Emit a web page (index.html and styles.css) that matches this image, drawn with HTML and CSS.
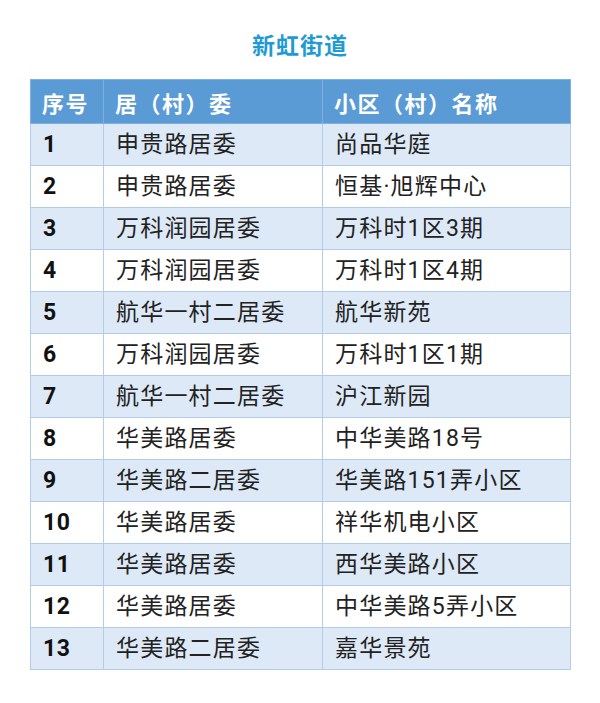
FILE: index.html
```html
<!DOCTYPE html>
<html lang="zh-CN">
<head>
<meta charset="utf-8">
<title>新虹街道</title>
<link rel="stylesheet" href="styles.css">
</head>
<body>
<div class="page">
  <h1 class="title">新虹街道</h1>
  <table class="list">
    <colgroup>
      <col class="c1"><col class="c2"><col class="c3">
    </colgroup>
    <thead>
      <tr><th>序号</th><th>居（村）委</th><th>小区（村）名称</th></tr>
    </thead>
    <tbody>
      <tr><td class="num">1</td><td>申贵路居委</td><td>尚品华庭</td></tr>
      <tr><td class="num">2</td><td>申贵路居委</td><td>恒基·旭辉中心</td></tr>
      <tr><td class="num">3</td><td>万科润园居委</td><td>万科时1区3期</td></tr>
      <tr><td class="num">4</td><td>万科润园居委</td><td>万科时1区4期</td></tr>
      <tr><td class="num">5</td><td>航华一村二居委</td><td>航华新苑</td></tr>
      <tr><td class="num">6</td><td>万科润园居委</td><td>万科时1区1期</td></tr>
      <tr><td class="num">7</td><td>航华一村二居委</td><td>沪江新园</td></tr>
      <tr><td class="num">8</td><td>华美路居委</td><td>中华美路18号</td></tr>
      <tr><td class="num">9</td><td>华美路二居委</td><td>华美路151弄小区</td></tr>
      <tr><td class="num">10</td><td>华美路居委</td><td>祥华机电小区</td></tr>
      <tr><td class="num">11</td><td>华美路居委</td><td>西华美路小区</td></tr>
      <tr><td class="num">12</td><td>华美路居委</td><td>中华美路5弄小区</td></tr>
      <tr><td class="num">13</td><td>华美路二居委</td><td>嘉华景苑</td></tr>
    </tbody>
  </table>
</div>
</body>
</html>
```

FILE: styles.css
```css
html, body {
  margin: 0;
  padding: 0;
  background: #ffffff;
}

.page {
  padding: 28px 30px 0 30px;
  font-family: "Roboto", "Noto Sans CJK SC", "Noto Sans", sans-serif;
}

.title {
  margin: 0 0 19px 0;
  text-align: center;
  font-family: "Noto Sans CJK SC", sans-serif;
  font-size: 23px;
  line-height: 32px;
  font-weight: 700;
  color: #1f9bd4;
  letter-spacing: 1px;
}

.list {
  width: 540px;
  border-collapse: collapse;
  table-layout: fixed;
  border: 1px solid #a9c6e6;
}

.c1 { width: 73px; }
.c2 { width: 219px; }
.c3 { width: 248px; }

.list th,
.list td {
  border: 1px solid #b3cde9;
  text-align: left;
  padding: 0 0 0 12px;
  white-space: nowrap;
  letter-spacing: 1.2px;
  line-height: 26px;
}

.list th {
  height: 43px;
  background: #5b9bd5;
  color: #ffffff;
  font-family: "Noto Sans CJK SC", sans-serif;
  font-size: 22px;
  font-weight: 700;
  border-color: #7fb0de;
  padding-left: 11px;
  letter-spacing: 1.5px;
}

.list td {
  height: 41px;
  font-size: 23px;
  color: #222222;
  font-weight: 400;
}

.list tbody tr:nth-child(odd) td {
  background: #dde9f6;
}

.list tbody tr:nth-child(even) td {
  background: #ffffff;
}

.list td.num {
  font-weight: 700;
  color: #111111;
  letter-spacing: 0.5px;
}
```
